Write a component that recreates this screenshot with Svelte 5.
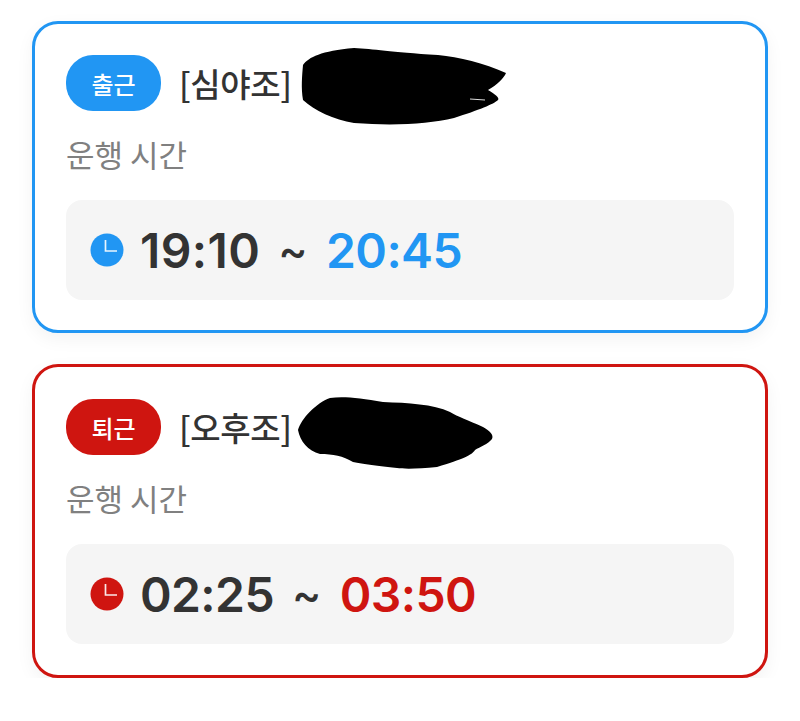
<script>
  const trips = [
    {
      kind: 'in',
      badge: '출근',
      title: '[심야조]',
      start: '19:10',
      end: '20:45',
      blob: 'M4 17 C10 9 22 3 55 0 C75 1 90 4 139 7 C160 9 185 15 207 25 C205 30 198 37 189 42 C196 46 201 50 199 52 C195 56 180 62 155 70 C130 76 95 78 55 75 C35 72 15 62 4 52 C2 40 3 28 4 17 Z',
      sliver: true
    },
    {
      kind: 'out',
      badge: '퇴근',
      title: '[오후조]',
      start: '02:25',
      end: '03:50',
      blob: 'M-1 38 C2 27 17 11 31 6 C44 4 61 6 84 10 C109 11 134 12 151 20 C159 25 169 28 184 35 C191 39 195 43 193 47 C189 52 181 55 176 58 C173 63 164 67 138 75 C119 77 104 77 98 76 C79 74 64 72 54 70 C44 64 34 62 21 62 C9 59 1 49 -1 38 Z',
      sliver: false
    }
  ];
</script>

<main>
  {#each trips as trip}
    <section class="card {trip.kind}">
      <div class="head">
        <span class="badge">{trip.badge}</span>
        <span class="title">{trip.title}</span>
        <svg class="scribble" width="210" height="80" viewBox="0 0 210 80" aria-hidden="true">
          <path d={trip.blob} fill="#000" />
          {#if trip.sliver}
            <path d="M171 51 L186 52" stroke="#ddd" stroke-width="1" />
          {/if}
        </svg>
      </div>
      <p class="label">운행 시간</p>
      <div class="times">
        <svg class="clock" width="34" height="34" viewBox="0 0 34 34" aria-hidden="true">
          <circle cx="17" cy="17" r="16.5" fill="currentColor" />
          <path d="M15.5 7 V18 H27" fill="none" stroke="#fff" stroke-opacity="0.9" stroke-width="1.7" />
        </svg>
        <span class="start">{trip.start}</span>
        <span class="tilde">~</span>
        <span class="end">{trip.end}</span>
      </div>
    </section>
  {/each}
</main>

<style>
  :global(body) {
    background: #fff;
  }

  main {
    display: flex;
    flex-direction: column;
    gap: 31px;
    padding: 21px 32px 0;
    font-family: Inter, "Noto Sans CJK KR", sans-serif;
  }

  .card {
    box-sizing: border-box;
    padding: 31px;
    border: 3px solid var(--accent);
    border-radius: 26px;
    background: #fff;
    box-shadow: 0 6px 18px rgba(0, 0, 0, 0.05);
  }

  .in {
    --accent: #2196f3;
    height: 312px;
  }

  .out {
    --accent: #cf1510;
    height: 314px;
    padding-top: 32px;
  }

  .head {
    position: relative;
    display: flex;
    align-items: center;
    gap: 18px;
    height: 56px;
  }

  .badge {
    display: flex;
    align-items: center;
    justify-content: center;
    width: 95px;
    height: 56px;
    border-radius: 27px;
    background: var(--accent);
    color: #fff;
    font-family: "Noto Sans CJK KR", sans-serif;
    font-size: 24px;
    font-weight: 500;
  }

  .title {
    color: #333;
    font-family: "Noto Sans CJK KR", sans-serif;
    font-size: 33px;
    font-weight: 500;
    letter-spacing: -0.4px;
  }

  /* marker scribble hiding the name */
  .scribble {
    position: absolute;
    left: 233px;
    top: -7px;
    overflow: visible;
  }

  .label {
    margin: 21px 0 24px;
    color: #808080;
    font-family: "Noto Sans CJK KR", sans-serif;
    font-size: 31px;
    line-height: 44px;
  }

  .times {
    display: flex;
    align-items: center;
    height: 100px;
    padding-left: 24px;
    border-radius: 16px;
    background: #f5f5f5;
    color: var(--accent);
    font-size: 48px;
    font-weight: 600;
    letter-spacing: -0.6px;
  }

  .clock {
    margin-right: 16px;
  }

  .start,
  .tilde {
    color: #333;
  }

  .in .start {
    letter-spacing: 0.4px;
  }

  .tilde {
    margin: 0 19px 0 18px;
    font-size: 44px;
    font-weight: 500;
  }
</style>
